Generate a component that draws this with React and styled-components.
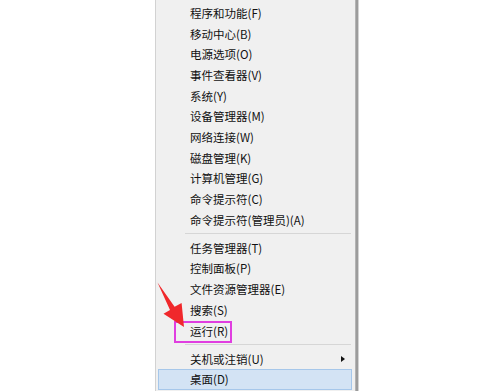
import styled, { createGlobalStyle } from "styled-components";

const GlobalStyle = createGlobalStyle`
    html, body {
        margin: 0;
        padding: 0;
        background: #ffffff;
    }
`;

const Page = styled.div`
    position: relative;
    width: 501px;
    height: 391px;
    overflow: hidden;
    padding-left: 155px;
    box-sizing: border-box;
    font-family: "Noto Sans CJK SC", "Noto Sans", sans-serif;
`;

const Menu = styled.ul`
    width: 201px;
    height: 100%;
    margin: 0;
    padding: 2.6px 0 0;
    list-style: none;
    box-sizing: border-box;
    background: #f0f0f0;
    border-left: 1px solid #d2d2d2;
    border-right: 1px solid #b4b4b4;
    box-shadow: 2px 0 0 #9c9c9c, 3px 0 0 #d4d4d4;
`;

const Item = styled.li`
    position: relative;
    height: 20.7px;
    display: flex;
    align-items: center;
    justify-content: space-between;
    box-sizing: border-box;
    padding: 0 10px 0 ${({ $active }) => ($active ? "31px" : "34px")};
    margin: ${({ $active }) => ($active ? "0 3px 0 2px" : "0")};
    font-size: 11.5px;
    color: #111111;
    white-space: nowrap;
    background: ${({ $active }) => ($active ? "#d3e3f4" : "transparent")};
    border: ${({ $active }) => ($active ? "1px solid #a6c7ea" : "none")};

    ${({ $marked }) =>
        $marked &&
        `
        &::before {
            content: "";
            position: absolute;
            left: 18px;
            top: 0.5px;
            width: 58px;
            height: 22px;
            box-sizing: border-box;
            border: 2.5px solid #e03ee0;
        }
    `}
`;

const Separator = styled.li`
    height: 7.3px;
    display: flex;
    align-items: center;
    margin: 0 4px 0 29px;

    &::after {
        content: "";
        flex: 1;
        height: 1px;
        background: #d6d6d6;
    }
`;

const SubArrow = styled.span`
    width: 0;
    height: 0;
    border-left: 4px solid #111;
    border-top: 3.5px solid transparent;
    border-bottom: 3.5px solid transparent;
`;

const Pointer = styled.svg`
    position: absolute;
    left: 0;
    top: 0;
    pointer-events: none;
`;

const groups = [
    [
        "程序和功能(F)",
        "移动中心(B)",
        "电源选项(O)",
        "事件查看器(V)",
        "系统(Y)",
        "设备管理器(M)",
        "网络连接(W)",
        "磁盘管理(K)",
        "计算机管理(G)",
        "命令提示符(C)",
        "命令提示符(管理员)(A)",
    ],
    ["任务管理器(T)", "控制面板(P)", "文件资源管理器(E)", "搜索(S)", "运行(R)"],
];

function App() {
    return (
        <>
            <GlobalStyle />
            <Page>
                <Menu>
                    {groups[0].map((label) => (
                        <Item key={label}>{label}</Item>
                    ))}
                    <Separator />
                    {groups[1].map((label) => (
                        <Item key={label} $marked={label === "运行(R)"}>
                            {label}
                        </Item>
                    ))}
                    <Separator />
                    <Item>
                        关机或注销(U)
                        <SubArrow />
                    </Item>
                    <Item $active>桌面(D)</Item>
                </Menu>

                <Pointer width="501" height="391" viewBox="0 0 501 391">
                    <polygon
                        points="157.5,282.5 174.6,306.8 181.6,303 184,327 163.5,313.8 170,310"
                        fill="#f0282b"
                    />
                </Pointer>
            </Page>
        </>
    );
}

export default App;
